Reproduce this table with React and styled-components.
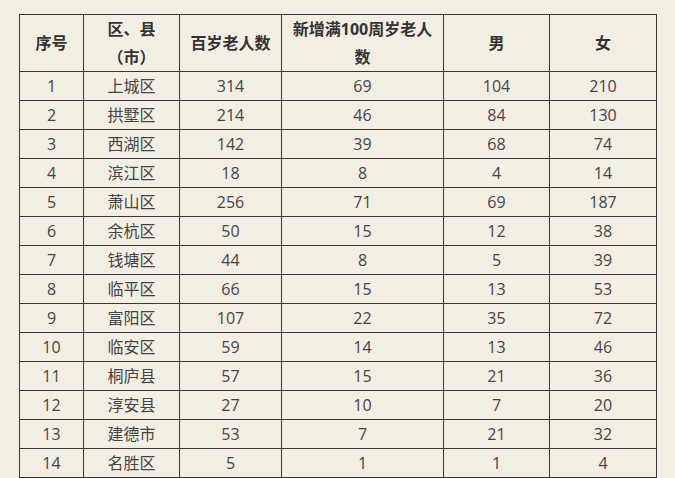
import React from "react";
import styled, { createGlobalStyle } from "styled-components";

const Global = createGlobalStyle`
  html, body { margin: 0; padding: 0; background: #f3eee4; }
  body { font-family: "Open Sans", "Noto Sans CJK SC", sans-serif; }
`;

const Page = styled.div`
  padding: 14px 0 0 19px;
  width: 675px;
  height: 478px;
  box-sizing: border-box;
  overflow: hidden;
`;

const Table = styled.table`
  border-collapse: collapse;
  table-layout: fixed;
  width: 637px;
  background: #f3eee4;
`;

const HeadCell = styled.th`
  border: 1px solid #3b3631;
  padding: 0;
  height: 56px;
  font-size: 16px;
  line-height: 28px;
  font-weight: bold;
  color: #333;
  text-align: center;
  vertical-align: middle;
`;

const Cell = styled.td`
  border: 1px solid #3b3631;
  padding: 0;
  height: 28px;
  font-size: 16px;
  line-height: 28px;
  color: #454545;
  text-align: center;
  vertical-align: middle;
  white-space: nowrap;
`;

const rows = [
  [1, "上城区", 314, 69, 104, 210],
  [2, "拱墅区", 214, 46, 84, 130],
  [3, "西湖区", 142, 39, 68, 74],
  [4, "滨江区", 18, 8, 4, 14],
  [5, "萧山区", 256, 71, 69, 187],
  [6, "余杭区", 50, 15, 12, 38],
  [7, "钱塘区", 44, 8, 5, 39],
  [8, "临平区", 66, 15, 13, 53],
  [9, "富阳区", 107, 22, 35, 72],
  [10, "临安区", 59, 14, 13, 46],
  [11, "桐庐县", 57, 15, 21, 36],
  [12, "淳安县", 27, 10, 7, 20],
  [13, "建德市", 53, 7, 21, 32],
  [14, "名胜区", 5, 1, 1, 4],
];

const widths = [64, 96, 102, 162, 106, 107];

export default function App() {
  return (
    <Page>
      <Global />
      <Table>
        <colgroup>
          {widths.map((w, i) => (
            <col key={i} style={{ width: w }} />
          ))}
        </colgroup>
        <thead>
          <tr>
            <HeadCell>序号</HeadCell>
            <HeadCell>
              区、县
              <br />（市）
            </HeadCell>
            <HeadCell>百岁老人数</HeadCell>
            <HeadCell>
              新增满100周岁老人
              <br />数
            </HeadCell>
            <HeadCell>男</HeadCell>
            <HeadCell>女</HeadCell>
          </tr>
        </thead>
        <tbody>
          {rows.map((r) => (
            <tr key={r[0]}>
              {r.map((v, i) => (
                <Cell key={i}>{v}</Cell>
              ))}
            </tr>
          ))}
        </tbody>
      </Table>
    </Page>
  );
}
